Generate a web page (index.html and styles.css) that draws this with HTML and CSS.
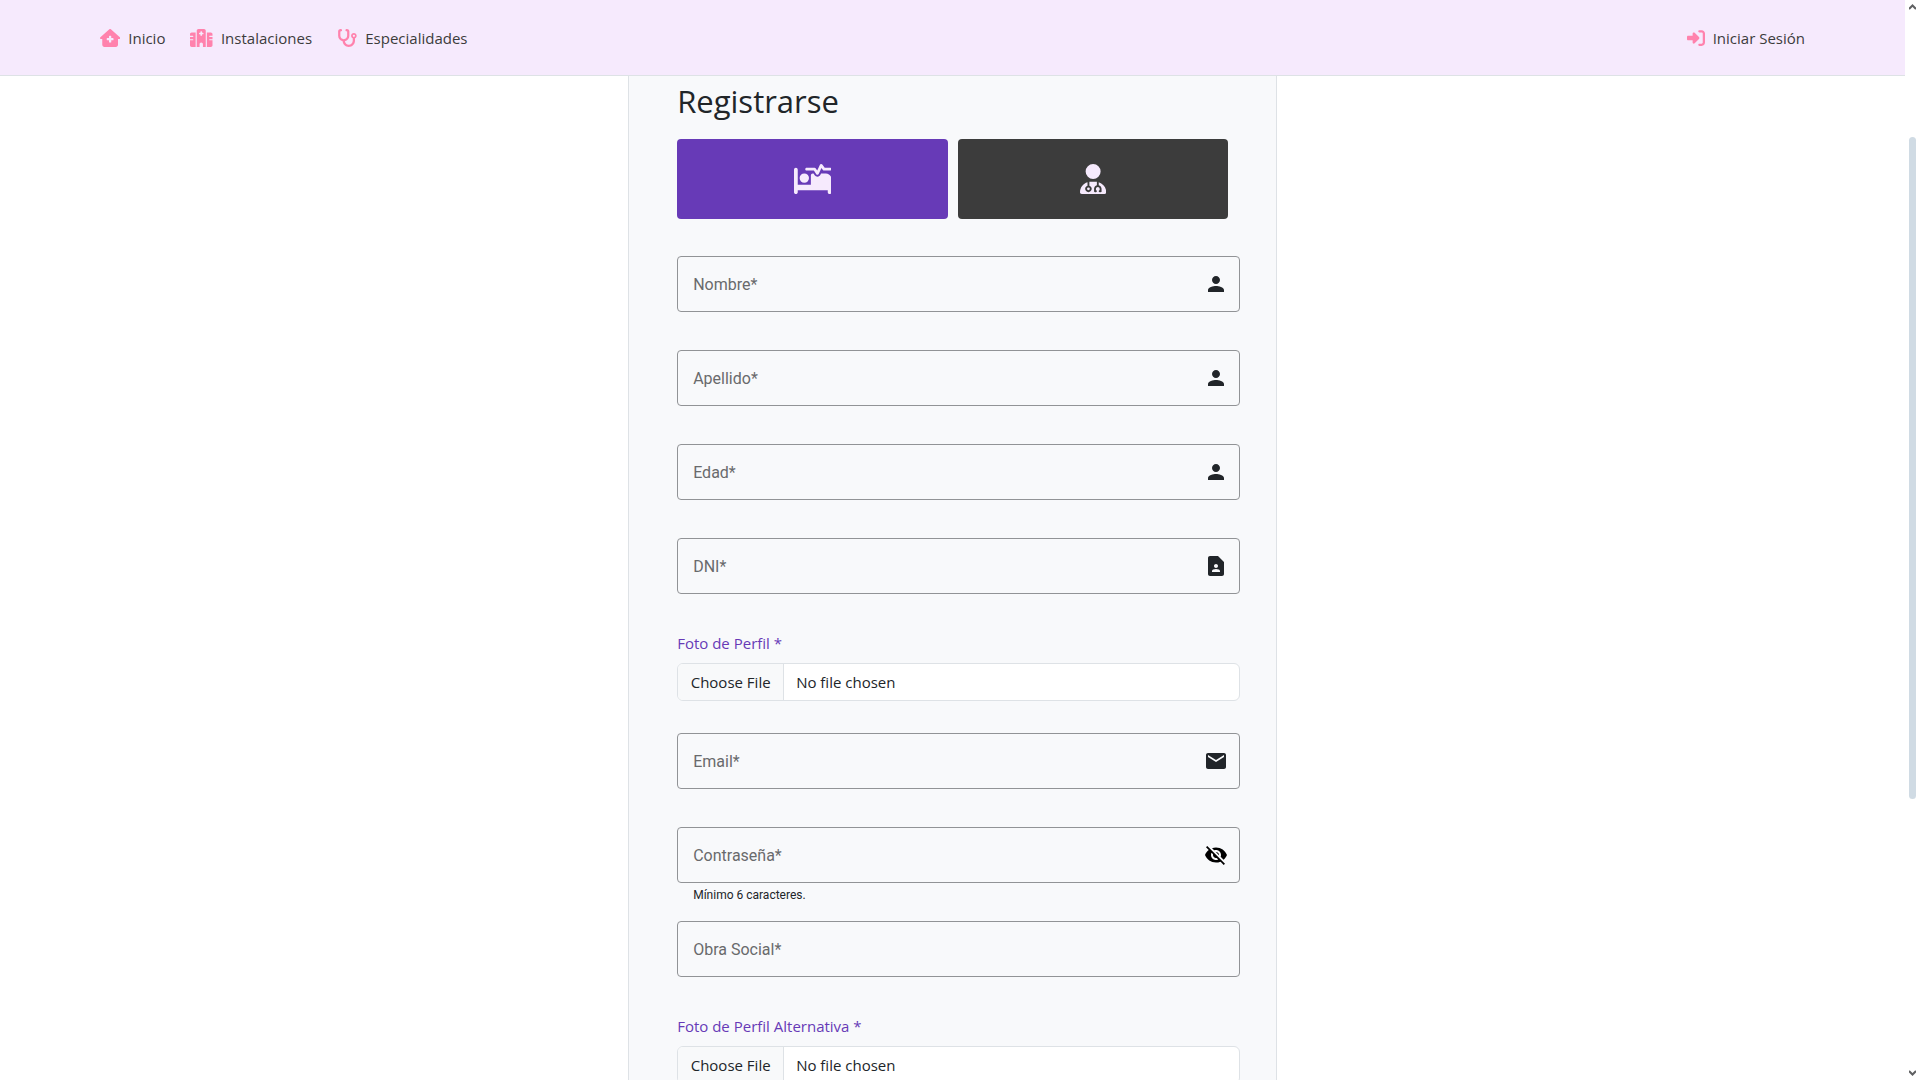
FILE: index.html
```html
<!DOCTYPE html>
<html lang="es">
<head>
<meta charset="utf-8">
<meta name="viewport" content="width=device-width, initial-scale=1">
<title>Registrarse</title>
<link rel="stylesheet" href="styles.css">
</head>
<body>
<div class="page">
  <header class="navbar">
    <nav class="nav-links">
      <a class="nav-link" href="#inicio">
        <svg class="nav-icon" viewBox="0 0 576 512" aria-hidden="true"><path d="M575.8 255.5c0 18-15 32.1-32 32.1h-32l.7 160.2c.2 35.5-28.5 64.3-64 64.3H128.1c-35.3 0-64-28.7-64-64V287.6H32c-18 0-32-14-32-32.1c0-9 3-17 10-24L266.4 8c7-7 15-8 22-8s15 2 21 7L564.8 231.5c8 7 12 15 11 24zM272 192c-8.800 0-16 7.200-16 16v48H208c-8.800 0-16 7.200-16 16v32c0 8.800 7.200 16 16 16h48v48c0 8.800 7.200 16 16 16h32c8.800 0 16-7.200 16-16V320h48c8.800 0 16-7.200 16-16V272c0-8.800-7.200-16-16-16H320V208c0-8.800-7.200-16-16-16H272z"/></svg>
        Inicio
      </a>
      <a class="nav-link" href="#instalaciones">
        <svg class="nav-icon" viewBox="0 0 640 512" aria-hidden="true"><path d="M192 48c0-26.500 21.500-48 48-48H400c26.500 0 48 21.500 48 48V512H368V432c0-26.500-21.500-48-48-48s-48 21.500-48 48v80H192V48zM48 96H160V512H48c-26.500 0-48-21.500-48-48V320H80c8.800 0 16-7.200 16-16s-7.200-16-16-16H0V224H80c8.800 0 16-7.200 16-16s-7.200-16-16-16H0V144c0-26.500 21.500-48 48-48zm544 0c26.500 0 48 21.500 48 48v48H560c-8.800 0-16 7.200-16 16s7.200 16 16 16h80v64H560c-8.800 0-16 7.200-16 16s7.200 16 16 16h80V464c0 26.500-21.500 48-48 48H480V96H592zM312 64c-8.800 0-16 7.200-16 16v24H272c-8.800 0-16 7.200-16 16v16c0 8.800 7.200 16 16 16h24v24c0 8.800 7.200 16 16 16h16c8.800 0 16-7.200 16-16V152h24c8.800 0 16-7.200 16-16V120c0-8.800-7.200-16-16-16H344V80c0-8.800-7.200-16-16-16H312z"/></svg>
        Instalaciones
      </a>
      <a class="nav-link" href="#especialidades">
        <svg class="nav-icon" viewBox="0 0 576 512" aria-hidden="true"><path d="M142.400 21.900c5.600 16.800-3.500 34.900-20.200 40.500L96 71.100V192c0 53 43 96 96 96s96-43 96-96V71.100l-26.100-8.700c-16.800-5.600-25.800-23.700-20.200-40.500s23.700-25.800 40.500-20.200l26.100 8.700C334.400 19.100 352 43.500 352 71.100V192c0 77.200-54.600 141.600-127.300 156.700C231 404.600 278.400 448 336 448c61.900 0 112-50.100 112-112V265.300c-28.300-12.300-48-40.500-48-73.300c0-44.200 35.800-80 80-80s80 35.800 80 80c0 32.800-19.700 61-48 73.300V336c0 97.200-78.800 176-176 176c-92.900 0-168.900-71.900-175.500-163.100C87.200 334.200 32 269.600 32 192V71.100c0-27.500 17.600-52 43.800-60.700l26.100-8.700c16.800-5.600 34.900 3.500 40.500 20.200zM480 224a32 32 0 1 0 0-64 32 32 0 1 0 0 64z"/></svg>
        Especialidades
      </a>
    </nav>
    <a class="nav-link" href="#iniciar-sesion">
      <svg class="nav-icon" viewBox="0 0 512 512" aria-hidden="true"><path d="M217.900 105.900L340.700 228.700c7.200 7.200 11.300 17.100 11.300 27.300s-4.100 20.100-11.300 27.300L217.900 406.100c-6.400 6.400-15 9.900-24 9.900c-18.700 0-33.900-15.200-33.900-33.900l0-62.100L32 320c-17.700 0-32-14.300-32-32l0-64c0-17.700 14.300-32 32-32l128 0 0-62.100c0-18.700 15.200-33.900 33.900-33.900c9 0 17.600 3.600 24 9.900zM352 416l64 0c17.700 0 32-14.300 32-32l0-256c0-17.700-14.300-32-32-32l-64 0c-17.700 0-32-14.300-32-32s14.300-32 32-32l64 0c53 0 96 43 96 96l0 256c0 53-43 96-96 96l-64 0c-17.700 0-32-14.300-32-32s14.300-32 32-32z"/></svg>
      Iniciar Sesión
    </a>
  </header>

  <main class="content">
    <form class="card">
      <h1 class="title">Registrarse</h1>
      <div class="roles">
        <button class="role role-active" type="button" aria-label="Paciente">
          <svg class="role-icon" viewBox="0 0 640 512" aria-hidden="true"><path d="M483.200 9.600L524 64h92c13.300 0 24 10.700 24 24s-10.700 24-24 24H512c-7.600 0-14.700-3.600-19.200-9.600L468.700 70.300l-47 99.900c-3.700 7.800-11.300 13.100-19.900 13.700s-16.900-3.400-21.700-10.600L339.200 112H216c-13.300 0-24-10.700-24-24s10.700-24 24-24H352c8 0 15.500 4 20 10.700l24.400 36.600 45.900-97.500C445.900 6.200 453.200 1 461.600 .1s16.600 2.700 21.600 9.500zM320 160h12.700l20.700 31.100c11.200 16.800 30.600 26.300 50.700 24.800s37.900-13.700 46.500-32L461.900 160H544c53 0 96 43 96 96V480c0 17.700-14.300 32-32 32s-32-14.300-32-32V448H352 320 64v32c0 17.700-14.300 32-32 32s-32-14.300-32-32V96C0 78.300 14.300 64 32 64s32 14.300 32 32V352H288V192c0-17.700 14.300-32 32-32zm-144 0a80 80 0 1 1 0 160 80 80 0 1 1 0-160z"/></svg>
        </button>
        <button class="role" type="button" aria-label="Especialista">
          <svg class="role-icon" viewBox="0 0 448 512" aria-hidden="true"><path d="M224 256a128 128 0 1 0 0-256 128 128 0 1 0 0 256zm-96 55.200C54 332.900 0 401.300 0 482.300C0 498.700 13.300 512 29.700 512H418.300c16.400 0 29.700-13.300 29.700-29.700c0-81-54-149.400-128-171.100V362c27.600 7.100 48 32.200 48 62v40c0 8.800-7.200 16-16 16H336c-8.800 0-16-7.200-16-16s7.200-16 16-16V424c0-17.700-14.300-32-32-32s-32 14.300-32 32v24c8.800 0 16 7.200 16 16s-7.200 16-16 16H256c-8.800 0-16-7.200-16-16V424c0-29.800 20.400-54.900 48-62V304.900c-6-.6-12.100-.9-18.300-.9H178.300c-6.200 0-12.300 .3-18.300 .9v65.400c23.100 6.900 40 28.300 40 53.700c0 30.900-25.100 56-56 56s-56-25.100-56-56c0-25.400 16.900-46.800 40-53.700V311.200zM144 448a24 24 0 1 0 0-48 24 24 0 1 0 0 48z"/></svg>
        </button>
      </div>

      <div class="field">
        <div class="box">
          <label for="nombre">Nombre*</label>
          <input id="nombre" type="text" required>
          <svg class="field-icon" viewBox="0 0 24 24" aria-hidden="true"><path d="M12 12c2.210 0 4-1.790 4-4s-1.790-4-4-4-4 1.790-4 4 1.790 4 4 4zm0 2c-2.670 0-8 1.340-8 4v2h16v-2c0-2.660-5.330-4-8-4z"/></svg>
        </div>
      </div>
      <div class="field">
        <div class="box">
          <label for="apellido">Apellido*</label>
          <input id="apellido" type="text" required>
          <svg class="field-icon" viewBox="0 0 24 24" aria-hidden="true"><path d="M12 12c2.210 0 4-1.790 4-4s-1.790-4-4-4-4 1.790-4 4 1.790 4 4 4zm0 2c-2.670 0-8 1.340-8 4v2h16v-2c0-2.660-5.330-4-8-4z"/></svg>
        </div>
      </div>
      <div class="field">
        <div class="box">
          <label for="edad">Edad*</label>
          <input id="edad" type="text" inputmode="numeric" required>
          <svg class="field-icon" viewBox="0 0 24 24" aria-hidden="true"><path d="M12 12c2.210 0 4-1.790 4-4s-1.790-4-4-4-4 1.790-4 4 1.790 4 4 4zm0 2c-2.670 0-8 1.340-8 4v2h16v-2c0-2.660-5.330-4-8-4z"/></svg>
        </div>
      </div>
      <div class="field">
        <div class="box">
          <label for="dni">DNI*</label>
          <input id="dni" type="text" inputmode="numeric" required>
          <svg class="field-icon" viewBox="0 0 24 24" aria-hidden="true"><path d="M14 2H6c-1.100 0-2 .9-2 2v16c0 1.100.89 2 1.990 2H18c1.100 0 2-.9 2-2V8l-6-6zm-2 8c1.100 0 2 .9 2 2s-.9 2-2 2-2-.9-2-2 .9-2 2-2zm4 8H8v-.57c0-.81.48-1.530 1.220-1.850.85-.37 1.790-.58 2.780-.58s1.930.21 2.780.58c.74.32 1.220 1.040 1.220 1.850V18z"/></svg>
        </div>
      </div>

      <div class="upload">
        <label class="upload-label" for="foto">Foto de Perfil *</label>
        <input class="upload-input" id="foto" type="file" accept="image/*">
      </div>

      <div class="field">
        <div class="box">
          <label for="email">Email*</label>
          <input id="email" type="email" required>
          <svg class="field-icon" viewBox="0 0 24 24" aria-hidden="true"><path d="M20 4H4c-1.100 0-1.990.9-1.990 2L2 18c0 1.100.9 2 2 2h16c1.100 0 2-.9 2-2V6c0-1.100-.9-2-2-2zm0 4l-8 5-8-5V6l8 5 8-5v2z"/></svg>
        </div>
      </div>
      <div class="field">
        <div class="box">
          <label for="clave">Contraseña*</label>
          <input id="clave" type="password" aria-describedby="clave-ayuda" required>
          <button class="toggle" type="button" aria-label="Mostrar contraseña">
            <svg class="field-icon" viewBox="0 0 24 24" aria-hidden="true"><path d="M12 7c2.760 0 5 2.240 5 5 0 .65-.13 1.260-.36 1.830l2.920 2.920c1.510-1.260 2.700-2.890 3.430-4.750-1.730-4.390-6-7.500-11-7.500-1.400 0-2.740.25-3.980.7l2.160 2.160C10.740 7.130 11.350 7 12 7zM2 4.270l2.280 2.280.46.46C3.080 8.300 1.780 10.020 1 12c1.730 4.390 6 7.500 11 7.500 1.550 0 3.030-.3 4.380-.84l.42.42L19.730 22 21 20.730 3.270 3 2 4.270zM7.530 9.800l1.550 1.550c-.05.21-.08.43-.08.65 0 1.660 1.340 3 3 3 .22 0 .44-.03.65-.08l1.550 1.550c-.67.33-1.410.53-2.200.53-2.760 0-5-2.240-5-5 0-.79.2-1.530.53-2.200zm4.310-.78l3.150 3.150.02-.16c0-1.660-1.340-3-3-3l-.17.01z"/></svg>
          </button>
        </div>
        <p class="hint" id="clave-ayuda">Mínimo 6 caracteres.</p>
      </div>
      <div class="field">
        <div class="box">
          <label for="obra">Obra Social*</label>
          <input id="obra" type="text" required>
        </div>
      </div>

      <div class="upload">
        <label class="upload-label" for="foto-alt">Foto de Perfil Alternativa *</label>
        <input class="upload-input" id="foto-alt" type="file" accept="image/*">
      </div>
    </form>
  </main>
</div>

<div class="scrollbar" aria-hidden="true">
  <svg class="scroll-arrow" viewBox="0 0 7 6"><path d="M0 5L3.500 1.500L7 5"/></svg>
  <div class="scroll-track">
    <div class="scroll-thumb"></div>
  </div>
  <svg class="scroll-arrow" viewBox="0 0 7 6"><path d="M0 1L3.500 4.500L7 1"/></svg>
</div>
</body>
</html>
```
FILE: styles.css
```css
* {
  box-sizing: border-box;
}

body {
  margin: 0;
  height: 100vh;
  display: grid;
  grid-template-columns: minmax(0, 1fr) 15px;
  overflow: hidden;
  background: #fff;
  color: #212529;
  font-family: "Open Sans", "Noto Sans", sans-serif;
  font-size: 15px;
  line-height: 24px;
}

.page {
  min-height: 0;
  display: flex;
  flex-direction: column;
  overflow: hidden;
}

/* Top bar */
.navbar {
  flex: none;
  height: 76px;
  padding: 0 100px;
  display: flex;
  align-items: center;
  justify-content: space-between;
  background: #f6eafd;
  border-bottom: 1px solid #dee2e6;
}

.nav-links {
  display: flex;
  gap: 25px;
}

.nav-link {
  display: flex;
  align-items: center;
  gap: 8px;
  color: #3c3c3c;
  text-decoration: none;
}

.nav-icon {
  height: 18px;
  fill: #ff82ad;
}

/* Form card */
.content {
  display: flex;
  justify-content: center;
}

.card {
  width: calc(34% + 1px);
  min-width: 340px;
  padding: 4px 36px 48px 48px;
  background: #f8f9fb;
  border: 1px solid #dee2e6;
  border-top: 0;
}

.title {
  margin: 0 0 16px;
  font-size: 31px;
  line-height: 43px;
  font-weight: 500;
}

.roles {
  display: flex;
  gap: 10px;
  margin: 0 12px 37px 0;
}

.role {
  flex: 1;
  height: 80px;
  display: flex;
  align-items: center;
  justify-content: center;
  border: 0;
  border-radius: 4px;
  background: #3c3c3c;
}

.role-active {
  background: #673ab7;
}

.role-icon {
  height: 30px;
  fill: #f6eafd;
}

.field {
  height: 94px;
  font-family: Roboto, sans-serif;
}

.box {
  height: 56px;
  padding: 0 11px 0 15px;
  display: flex;
  align-items: center;
  border: 1px solid #919396;
  border-radius: 4px;
}

.box label {
  padding-top: 2px;
  color: #696a6c;
  font-size: 16px;
}

.box input {
  flex: 1;
  min-width: 0;
  height: 100%;
  border: 0;
  outline: 0;
  background: transparent;
  font: inherit;
}

.field-icon {
  width: 24px;
  height: 24px;
  display: block;
  fill: #212529;
}

.toggle {
  padding: 0;
  border: 0;
  background: transparent;
}

.toggle .field-icon {
  fill: #000;
}

.hint {
  margin: 0;
  padding: 0 16px;
  font-size: 12px;
}

/* File pickers */
.upload {
  margin-bottom: 32px;
}

.upload-label {
  display: block;
  margin-bottom: 9px;
  line-height: 22px;
  color: #673ab7;
}

.upload-input {
  display: block;
  width: 100%;
  height: 38px;
  padding: 0;
  overflow: hidden;
  border: 1px solid #dee2e6;
  border-radius: 6px;
  background: #fff;
  color: #212529;
  font: inherit;
  line-height: 36px;
}

.upload-input::file-selector-button {
  width: 106px;
  height: 36px;
  margin: 0 12px 0 0;
  padding: 0;
  border: 0;
  border-right: 1px solid #dee2e6;
  background: #f8f9fa;
  color: #212529;
  font: inherit;
}

/* Scroll bar */
.scrollbar {
  padding: 4px;
  display: flex;
  flex-direction: column;
}

.scroll-arrow {
  width: 7px;
  height: 6px;
  fill: none;
  stroke: #5f6062;
  stroke-width: 2;
}

.scroll-track {
  flex: 1;
  padding-top: 127px;
}

.scroll-thumb {
  height: 71%;
  border-radius: 4px;
  background: #d0dbe4;
}
```
